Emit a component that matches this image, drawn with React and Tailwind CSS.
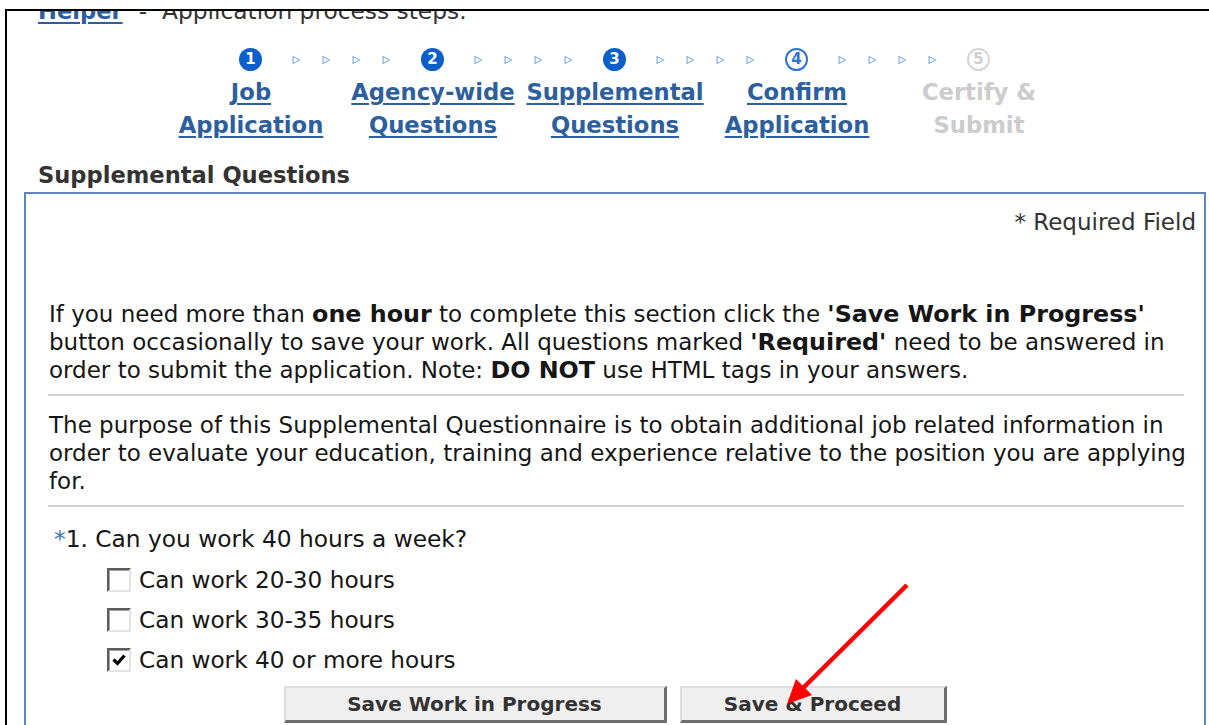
import React from 'react';

const steps = [
  { n: 1, lines: ['Job', 'Application'], state: 'done' },
  { n: 2, lines: ['Agency-wide', 'Questions'], state: 'done' },
  { n: 3, lines: ['Supplemental', 'Questions'], state: 'done' },
  { n: 4, lines: ['Confirm', 'Application'], state: 'current' },
  { n: 5, lines: ['Certify &', 'Submit'], state: 'locked' },
];

const options = [
  { label: 'Can work 20-30 hours', checked: false },
  { label: 'Can work 30-35 hours', checked: false },
  { label: 'Can work 40 or more hours', checked: true },
];

const StepBadge = ({ n, state }) => {
  if (state === 'done') {
    return (
      <div className="w-[23px] h-[23px] rounded-full bg-[#0b5fcb] text-white text-[15px] font-bold flex items-center justify-center leading-none">
        {n}
      </div>
    );
  }
  if (state === 'current') {
    return (
      <div className="w-[23px] h-[23px] rounded-full border-2 border-[#2a74d6] bg-white text-[#2a74d6] text-[15px] font-bold flex items-center justify-center leading-none">
        {n}
      </div>
    );
  }
  return (
    <div className="w-[23px] h-[23px] rounded-full border-2 border-[#d6d6d6] bg-white text-[#cfcfcf] text-[15px] font-bold flex items-center justify-center leading-none">
      {n}
    </div>
  );
};

const Pointer = () => (
  <svg width="10" height="10" viewBox="0 0 10 10">
    <polygon points="2,1.5 8.5,5 2,8.5" fill="none" stroke="#8fb6e8" strokeWidth="1.3" strokeLinejoin="round" />
  </svg>
);

const Pointers = () => (
  <div className="w-[159px] px-[19px] flex">
    {[0, 1, 2, 3].map(i => (
      <div key={i} className="w-[30px] flex justify-center">
        <Pointer />
      </div>
    ))}
  </div>
);

const Checkbox = ({ checked }) => (
  <span className="w-[24px] h-[24px] shrink-0 bg-white border-2 border-t-[#5c5c5c] border-l-[#5c5c5c] border-r-[#e4e4e4] border-b-[#e4e4e4] shadow-[inset_1px_1px_0_#a0a0a0] flex items-center justify-center">
    {checked && (
      <svg width="16" height="16" viewBox="0 0 16 16">
        <path d="M2.5 7.5 L6.5 11.5 L13.5 3.5" fill="none" stroke="#000" strokeWidth="3.2" />
      </svg>
    )}
  </span>
);

const App = () => {
  return (
    <div className="relative w-[1209px] h-[725px] overflow-hidden bg-white font-['DejaVu_Sans',sans-serif] text-[#161616]">
      <div className="ml-[5px] mt-[9px] h-[716px] border-l-2 border-t-2 border-black overflow-hidden">
        {/* intro line, mostly scrolled out of view */}
        <div className="-mt-[14px] ml-[31px] text-[23.3px] leading-[28px] whitespace-nowrap">
          <a className="text-[22.6px] font-bold text-[#2d5f9e] underline decoration-2 underline-offset-[3px]">Helper</a>
          <span className="ml-[16px] text-[#333]">-</span>
          <span className="ml-[15px] text-[#333]">Application process steps:</span>
        </div>

        {/* progress steps */}
        <div className="mt-[23px] ml-[232px] flex items-center h-[23px]">
          {steps.map((s, i) => (
            <React.Fragment key={s.n}>
              <StepBadge n={s.n} state={s.state} />
              {i < steps.length - 1 && <Pointers />}
            </React.Fragment>
          ))}
        </div>
        <div className="mt-[5px] ml-[153px] grid grid-cols-[repeat(5,182px)] text-[22.7px] font-bold leading-[33px] text-center">
          {steps.map(s => (
            <div key={s.n}>
              {s.state === 'locked' ? (
                <span className="text-[#cccccc]">{s.lines[0]}<br />{s.lines[1]}</span>
              ) : (
                <a className="text-[#2d5f9e] underline decoration-2 underline-offset-[3px]">{s.lines[0]}<br />{s.lines[1]}</a>
              )}
            </div>
          ))}
        </div>

        <h2 className="mt-[19px] ml-[31px] text-[22.6px] leading-[28px] font-bold text-[#333]">Supplemental Questions</h2>

        <div className="mt-[3px] ml-[17px] w-[1182px] h-[600px] border-2 border-[#5f85b7] bg-white">
          <div className="pt-[14px] pr-[8px] text-right text-[23px] leading-[28px] text-[#333]">* Required Field</div>

          <div className="mt-[64px] pl-[22px] pr-[20px] text-[23px] leading-[28px]">
            <p className="pl-[1px] whitespace-nowrap [&_b]:text-[23.8px]">
              If you need more than <b>one hour</b> to complete this section click the <b>'Save Work in Progress'</b><br />
              button occasionally to save your work. All questions marked <b>'Required'</b> need to be answered in<br />
              order to submit the application. Note: <b>DO NOT</b> use HTML tags in your answers.
            </p>
            <div className="mt-[10px] border-t-2 border-[#d2d2d2]" />
            <p className="mt-[15px] pl-[1px] whitespace-nowrap">
              The purpose of this Supplemental Questionnaire is to obtain additional job related information in<br />
              order to evaluate your education, training and experience relative to the position you are applying<br />
              for.
            </p>
            <div className="mt-[10px] border-t-2 border-[#d2d2d2]" />

            <div className="mt-[18px] ml-[6px] text-[23.3px]">
              <span className="text-[#3b78c4]">*</span>1. Can you work 40 hours a week?
            </div>
            <div className="mt-[7px] ml-[59px] text-[23.2px]">
              {options.map(o => (
                <label key={o.label} className="h-[40px] flex items-center gap-[8px]">
                  <Checkbox checked={o.checked} />
                  <span>{o.label}</span>
                </label>
              ))}
            </div>
          </div>

          <div className="mt-[6px] flex justify-center gap-[13px]">
            <button className="w-[383px] h-[37px] bg-[#efefef] border-t-2 border-l-2 border-r-[3px] border-b-[3px] border-t-[#dedede] border-l-[#dedede] border-r-[#6e6e6e] border-b-[#6e6e6e] text-[20px] font-bold text-[#333]">
              Save Work in Progress
            </button>
            <button className="w-[267px] h-[37px] bg-[#efefef] border-t-2 border-l-2 border-r-[3px] border-b-[3px] border-t-[#dedede] border-l-[#dedede] border-r-[#6e6e6e] border-b-[#6e6e6e] text-[20px] font-bold text-[#333]">
              Save &amp; Proceed
            </button>
          </div>
        </div>
      </div>

      {/* red call-out arrow */}
      <svg className="absolute inset-0 pointer-events-none" width="1209" height="725">
        <line x1="907" y1="585" x2="800" y2="691" stroke="#ff0000" strokeWidth="4.5" />
        <polygon points="787,704 796,679 812,695" fill="#ff0000" />
      </svg>
    </div>
  );
};

export default App;
